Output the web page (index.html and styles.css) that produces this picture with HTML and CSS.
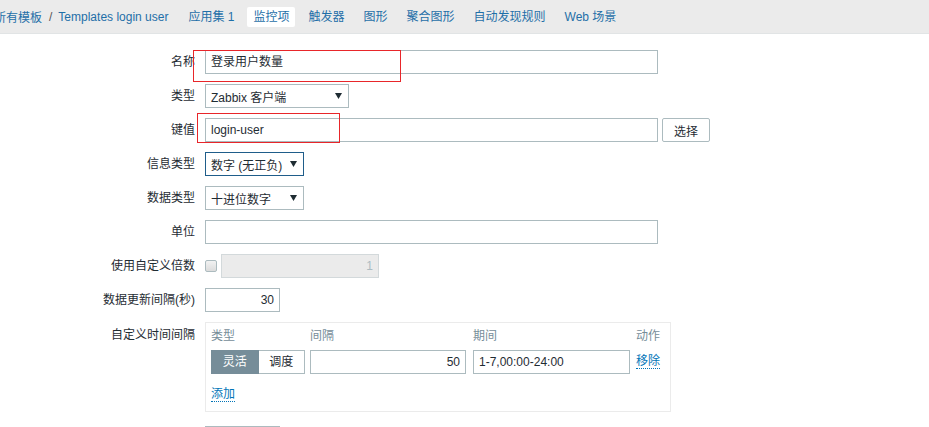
FILE: index.html
```html
<!DOCTYPE html>
<html lang="zh">
<head>
<meta charset="utf-8">
<title>监控项</title>
<link rel="stylesheet" href="styles.css">
</head>
<body>
<nav class="topnav">
  <a class="crumb first">所有模板</a>
  <span class="sep">/</span>
  <a class="crumb">Templates login user</a>
  <a class="tab gap">应用集 1</a>
  <a class="tab active">监控项</a>
  <a class="tab">触发器</a>
  <a class="tab">图形</a>
  <a class="tab">聚合图形</a>
  <a class="tab">自动发现规则</a>
  <a class="tab">Web 场景</a>
</nav>

<form class="form">
  <label class="lbl">名称</label>
  <div class="ctl"><div class="input wide">登录用户数量</div><span class="mark mark1"></span></div>

  <label class="lbl">类型</label>
  <div class="ctl"><div class="select w143"><span>Zabbix 客户端</span><svg class="arrow" width="7" height="6" viewBox="0 0 7 6"><path d="M0 0H7L3.5 6Z"/></svg></div></div>

  <label class="lbl">键值</label>
  <div class="ctl"><div class="input wide">login-user</div><button type="button" class="btn">选择</button><span class="mark mark2"></span></div>

  <label class="lbl">信息类型</label>
  <div class="ctl"><div class="select w98 focused"><span>数字 (无正负)</span><svg class="arrow" width="7" height="6" viewBox="0 0 7 6"><path d="M0 0H7L3.5 6Z"/></svg></div></div>

  <label class="lbl">数据类型</label>
  <div class="ctl"><div class="select w98"><span>十进位数字</span><svg class="arrow" width="7" height="6" viewBox="0 0 7 6"><path d="M0 0H7L3.5 6Z"/></svg></div></div>

  <label class="lbl">单位</label>
  <div class="ctl"><div class="input wide"></div></div>

  <label class="lbl">使用自定义倍数</label>
  <div class="ctl"><span class="checkbox"></span><div class="input disabled num">1</div></div>

  <label class="lbl">数据更新间隔(秒)</label>
  <div class="ctl"><div class="input short num">30</div></div>

  <label class="lbl top">自定义时间间隔</label>
  <div class="ctl">
    <div class="intervals">
      <div class="ih">类型</div>
      <div class="ih">间隔</div>
      <div class="ih">期间</div>
      <div class="ih">动作</div>

      <div class="seg"><span class="seg-on">灵活</span><span class="seg-off">调度</span></div>
      <div class="input i156 num">50</div>
      <div class="input i157">1-7,00:00-24:00</div>
      <div class="cell-link"><a class="dlink">移除</a></div>

      <div class="addrow"><a class="dlink">添加</a></div>
    </div>
  </div>

  <label class="lbl"></label>
  <div class="ctl"><div class="input short"></div></div>
</form>
</body>
</html>
```

FILE: styles.css
```css
* { box-sizing: border-box; }
html, body { margin: 0; padding: 0; background: #fff; overflow: hidden; }
body {
  font-family: "Liberation Sans", "Noto Sans CJK SC", sans-serif;
  font-size: 12px;
  color: #1f2c33;
}

.topnav {
  display: flex;
  align-items: center;
  height: 34px;
  background: #ebebeb;
  border-bottom: 1px solid #e1e4e5;
  white-space: nowrap;
}
.topnav a { color: #1f6fa8; text-decoration: none; }
.crumb.first { margin-left: -6px; }
.sep { color: #555; margin: 0 6px 0 7px; }
.tab {
  padding: 3px 6px;
  height: 20px;
  line-height: 14px;
  margin-right: 7px;
}
.tab.gap { margin-left: 14px; }
.tab.active { background: #fff; border-radius: 2px; }

.form {
  display: grid;
  grid-template-columns: 195px 1fr;
  column-gap: 10px;
  row-gap: 10px;
  padding-top: 16px;
}
.lbl {
  text-align: right;
  line-height: 24px;
  white-space: nowrap;
}
.lbl.top { line-height: 14px; padding-top: 6px; }
.ctl {
  position: relative;
  display: flex;
  align-items: center;
  min-height: 24px;
}

.input {
  height: 24px;
  border: 1px solid #acbbbf;
  background: #fff;
  padding: 0 5px;
  line-height: 22px;
  white-space: nowrap;
  overflow: hidden;
  color: #1f2c33;
}
.input.wide { width: 453px; }
.input.short { width: 75px; }
.input.num { text-align: right; }
.input.disabled {
  width: 158px;
  margin-left: 4px;
  background: #ebebeb;
  border-color: #d3d9db;
  color: #acbbc2;
}
.i156 { width: 156px; }
.i157 { width: 157px; }

.select {
  height: 24px;
  border: 1px solid #acbbbf;
  background: #fff;
  padding: 0 6px 0 5px;
  display: flex;
  align-items: center;
  justify-content: space-between;
  white-space: nowrap;
}
.select.w143 { width: 144px; }
.select.w98 { width: 99px; }
.select.focused { border-color: #1f5d8a; }
.arrow { fill: #1f2c33; display: block; flex: none; }

.btn {
  margin-left: 4px;
  width: 48px;
  height: 24px;
  border: 1px solid #acbbbf;
  border-radius: 2px;
  background: #fff;
  font: inherit;
  color: #1f2c33;
  padding: 0;
}

.checkbox {
  width: 12px;
  height: 12px;
  border: 1px solid #acbbbf;
  border-radius: 2px;
  background: linear-gradient(#f2f2f2, #dcdcdc);
  flex: none;
}

.mark {
  position: absolute;
  border: 1px solid #e8262a;
  pointer-events: none;
}
.mark1 { left: -12px; top: 0; width: 208px; height: 32px; }
.mark2 { left: -8px; top: -5px; width: 143px; height: 30px; }

.intervals {
  width: 466px;
  border: 1px solid #ebebeb;
  padding: 6px 5px 10px 5px;
  margin-bottom: 4px;
  display: grid;
  grid-template-columns: 99px 163px 163px auto;
  row-gap: 7px;
}
.ih {
  color: #768d99;
  line-height: 14px;
}
.seg {
  display: flex;
  width: 94px;
  height: 24px;
}
.seg span {
  flex: 1;
  text-align: center;
  line-height: 22px;
  border: 1px solid #acbbbf;
}
.seg-on { background: #768d99; border-color: #768d99 !important; color: #fff; }
.seg-off { background: #fff; border-left: none !important; }
.cell-link { display: flex; align-items: center; }
.dlink {
  color: #0275b8;
  text-decoration: none;
  border-bottom: 1px dotted #0275b8;
  line-height: 13px;
}
.addrow {
  grid-column: 1 / -1;
  padding-top: 6px;
  line-height: 14px;
}
```
